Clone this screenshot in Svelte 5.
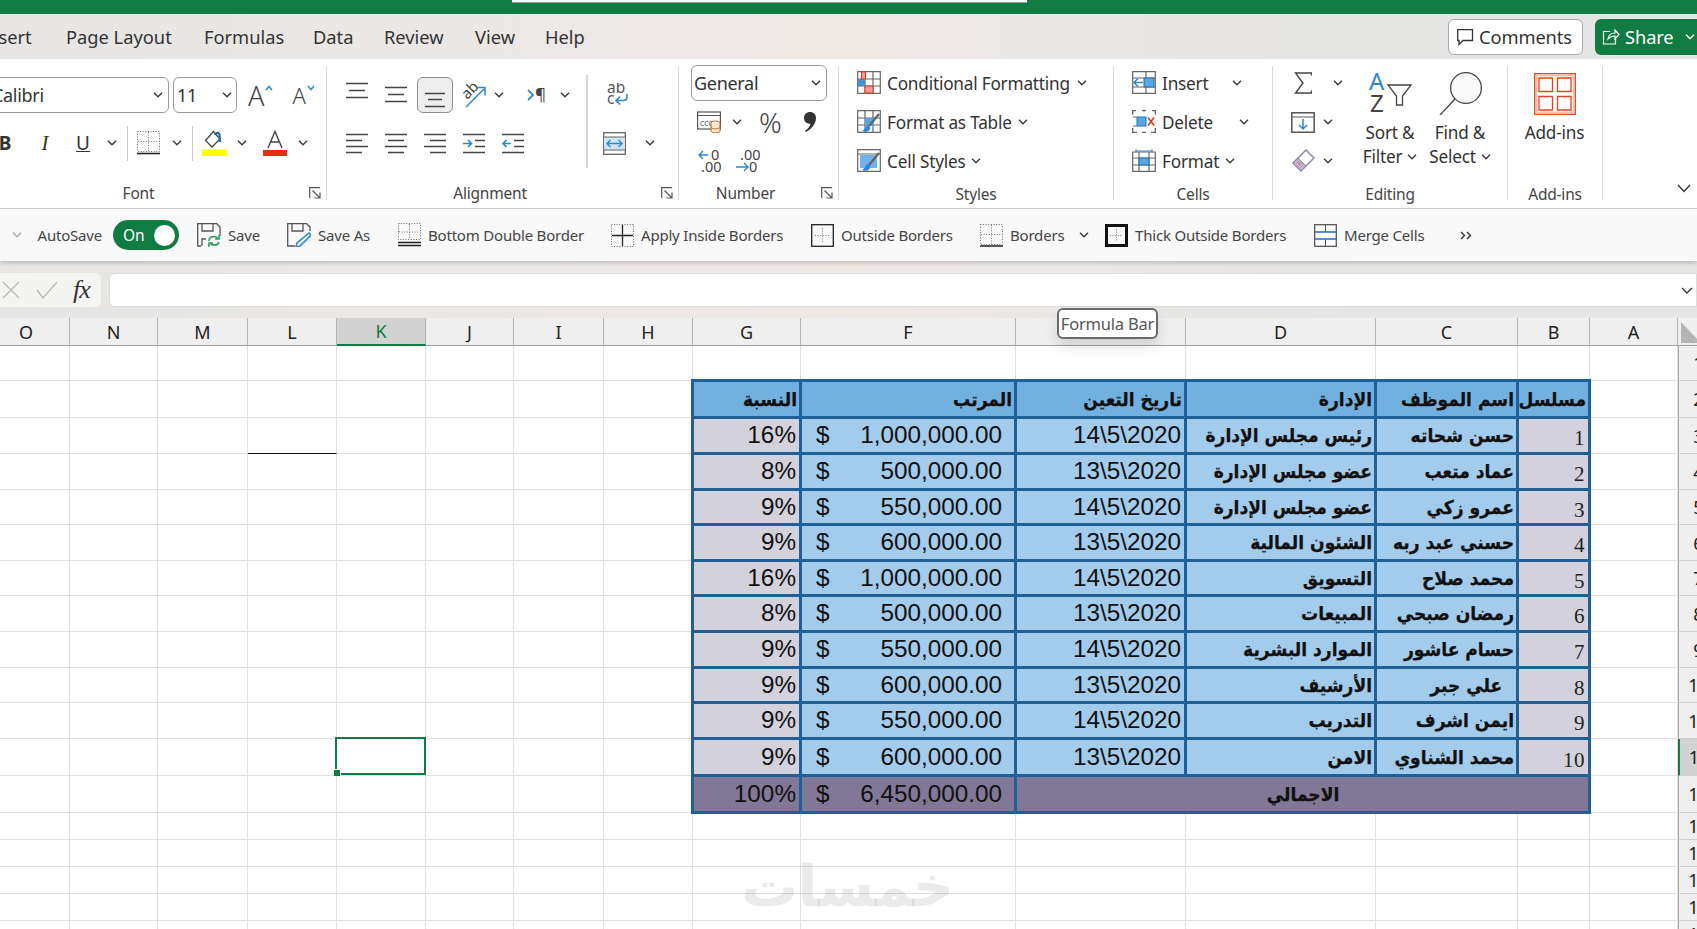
<script>
  const cols = ['O','N','M','L','K','J','I','H','G','F','E','D','C','B','A'];
  const heads = ['النسبة','المرتب','تاريخ التعين','الإدارة','اسم الموظف','مسلسل'];
  const people = [
    ['16%','1,000,000.00','14\\5\\2020','رئيس مجلس الإدارة','حسن شحاته','1'],
    ['8%','500,000.00','13\\5\\2020','عضو مجلس الإدارة','عماد متعب','2'],
    ['9%','550,000.00','14\\5\\2020','عضو مجلس الإدارة','عمرو زكي','3'],
    ['9%','600,000.00','13\\5\\2020','الشئون المالية','حسني عبد ربه','4'],
    ['16%','1,000,000.00','14\\5\\2020','التسويق','محمد صلاح','5'],
    ['8%','500,000.00','13\\5\\2020','المبيعات','رمضان صبحي','6'],
    ['9%','550,000.00','14\\5\\2020','الموارد البشرية','حسام عاشور','7'],
    ['9%','600,000.00','13\\5\\2020','الأرشيف','  علي جبر','8'],
    ['9%','550,000.00','14\\5\\2020','التدريب','ايمن اشرف','9'],
    ['9%','600,000.00','13\\5\\2020','الامن','محمد الشناوي','10']
  ];
  const rows = Array.from({ length: 18 }, (_, i) => i + 1);
  const blank = (c) => c < 8 || c > 13;
</script>

{#snippet chev(c = '')}
  <svg class="chev {c}" width="10" height="6" viewBox="0 0 10 6"><path d="M1 .8l4 4 4-4" fill="none" stroke="#3a3a3a" stroke-width="1.4"/></svg>
{/snippet}
{#snippet launcher(c = '')}
  <svg class="launch {c}" width="12" height="12" viewBox="0 0 12 12"><path d="M.7 11V.7H11M3.5 3.5l7 7M5.5 11h5.500V5.500" fill="none" stroke="#555" stroke-width="1.200"/></svg>
{/snippet}
{#snippet lines(ys, c = '')}
  <svg class={c} width="22" height="36" viewBox="0 0 22 36"><path d={ys} fill="none" stroke="#444" stroke-width="1.500"/></svg>
{/snippet}

<div class="app">
  <div class="green"><div class="search"></div></div>

  <div class="tabs">
    <div class="tabrow">
      <span>Insert</span><span>Page Layout</span><span>Formulas</span><span>Data</span><span>Review</span><span>View</span><span>Help</span>
    </div>
    <button class="comments">
      <svg width="18" height="18" viewBox="0 0 18 18"><path d="M1.700 1.700h14.800v10.800H7l-4 4v-4H1.700z" fill="none" stroke="#333" stroke-width="1.300"/></svg>
      Comments
    </button>
    <button class="share">
      <svg width="18" height="18" viewBox="0 0 18 18"><path d="M8 3.500H1.500V16h12v-5M6 11c.500-4 3.500-6 7-6V2l4 4.500L13 11V8c-3 0-5 .8-7 3z" fill="none" stroke="#fff" stroke-width="1.200"/></svg>
      Share
      <svg class="m6" width="10" height="6" viewBox="0 0 10 6"><path d="M1 .8l4 4 4-4" fill="none" stroke="#fff" stroke-width="1.400"/></svg>
    </button>
  </div>

  <div class="ribbon">
    <!-- Font -->
    <section class="group g-font">
      <div class="row r1">
        <div class="combo c-font"><span>Calibri</span>{@render chev()}</div>
        <div class="combo c-size"><span>11</span>{@render chev()}</div>
        <span class="big-a m11">A</span>
        <svg class="caret" width="8" height="6" viewBox="0 0 8 6"><path d="M1 5l3-3.500L7 5" fill="none" stroke="#2b88d8" stroke-width="1.500"/></svg>
        <span class="small-a m19">A</span>
        <svg class="caret" width="8" height="6" viewBox="0 0 8 6"><path d="M1 1l3 3.500L7 1" fill="none" stroke="#2b88d8" stroke-width="1.500"/></svg>
      </div>
      <div class="row r2">
        <b class="glyph w20 m15">B</b>
        <i class="glyph ital w18 m21">I</i>
        <u class="glyph w18 m20">U</u>
        {@render chev('m15')}
        <span class="vsep m10"></span>
        <svg class="m9" width="23" height="24" viewBox="0 0 23 24">
          <rect x=".5" y=".5" width="22" height="20" fill="none" stroke="#666" stroke-dasharray="1 1.600"/>
          <path d="M11.500 1v19M1 10.500h21" fill="none" stroke="#777" stroke-dasharray="1 1.600"/>
          <path d="M0 22.500h23" stroke="#222" stroke-width="1.600"/>
        </svg>
        {@render chev('m12')}
        <span class="vsep m10"></span>
        <svg class="m9" width="25" height="26" viewBox="0 0 25 26">
          <path d="M11.500 1.500L3.500 10.500l6.500 6.500 8-8z" fill="none" stroke="#444" stroke-width="1.300"/>
          <path d="M13 5c1-3 4-3 4.500 0l.8 7" fill="none" stroke="#1565a8" stroke-width="2"/>
          <rect y="19.500" width="25" height="6.500" fill="#ffff00"/>
        </svg>
        {@render chev('m10')}
        <svg class="m16" width="24" height="26" viewBox="0 0 24 26">
          <path d="M5 18L12 1.500 19 18M7.500 12h9" fill="none" stroke="#444" stroke-width="1.400"/>
          <rect y="20" width="24" height="6" fill="#e52f0c"/>
        </svg>
        {@render chev('m11')}
      </div>
      <div class="lbl up"><span class="lt w317">Font</span>{@render launcher('m12')}</div>
    </section>

    <!-- Alignment -->
    <section class="group g-align">
      <div class="body">
        <div class="acol1">
          <div class="row r1">
            {@render lines('M0 6.500h22M3 13.500h16M0 20.500h22','m19')}
            {@render lines('M0 10.500h22M3 17.500h16M0 24.500h22','m17')}
            <span class="pressed m10">{@render lines('M1 16.500h20M4 22.500h14M1 29.500h20')}</span>
            <svg class="m8" width="26" height="28" viewBox="0 0 26 28">
              <text x="2" y="15" transform="rotate(-45 9 12)" class="abtxt">ab</text>
              <path d="M5 26L23 8M16 6.500h8v8" fill="none" stroke="#2b88d8" stroke-width="1.500"/>
            </svg>
            {@render chev('m7')}
            <svg class="m23" width="20" height="16" viewBox="0 0 20 16">
              <path d="M1 3l5 5-5 5" fill="none" stroke="#2b88d8" stroke-width="1.800"/>
              <text x="8" y="13" class="pilcrow">¶</text>
            </svg>
            {@render chev('m13')}
          </div>
          <div class="row r2 t3">
            <svg class="m19" width="22" height="22" viewBox="0 0 22 22"><path d="M0 2.500h22M0 8.500h16M0 14.500h22M0 20.500h16" fill="none" stroke="#444" stroke-width="1.500"/></svg>
            <svg class="m17" width="22" height="22" viewBox="0 0 22 22"><path d="M0 2.500h22M3 8.500h16M0 14.500h22M3 20.500h16" fill="none" stroke="#444" stroke-width="1.500"/></svg>
            <svg class="m17" width="22" height="22" viewBox="0 0 22 22"><path d="M0 2.500h22M6 8.500h16M0 14.500h22M6 20.500h16" fill="none" stroke="#444" stroke-width="1.500"/></svg>
            <svg class="m17" width="22" height="22" viewBox="0 0 22 22"><path d="M0 2.500h22M12 8.500h10M12 14.500h10M0 20.500h22" fill="none" stroke="#444" stroke-width="1.500"/><path d="M0 11.500h8M5 8l3.500 3.500L5 15" fill="none" stroke="#2b88d8" stroke-width="1.700"/></svg>
            <svg class="m17" width="22" height="22" viewBox="0 0 22 22"><path d="M0 2.500h22M12 8.500h10M12 14.500h10M0 20.500h22" fill="none" stroke="#444" stroke-width="1.500"/><path d="M9 11.500H1M4.500 8L1 11.500 4.500 15" fill="none" stroke="#2b88d8" stroke-width="1.700"/></svg>
          </div>
        </div>
        <span class="subsep"></span>
        <div class="acol2">
          <div class="row r1">
            <svg class="m19" width="22" height="24" viewBox="0 0 22 24">
              <text x="0" y="10" class="wraptxt">ab</text><text x="0" y="21" class="wraptxt">c</text>
              <path d="M20 11v3c0 2.500-1 3.500-3.500 3.500H9M13 13.500l-4 4 4 4" fill="none" stroke="#2b88d8" stroke-width="1.600"/>
            </svg>
          </div>
          <div class="row r2 t3">
            <svg class="m15" width="23" height="23" viewBox="0 0 23 23">
              <rect x=".7" y=".7" width="21.600" height="21.600" fill="#fff" stroke="#666" stroke-width="1.300"/>
              <rect x="1" y="5" width="21" height="13" fill="#cfe4f7"/>
              <path d="M1 5h21M1 18h21" stroke="#666"/>
              <path d="M4 11.500h15M7.500 8L4 11.500 7.500 15M15.500 8l3.500 3.500-3.500 3.500" fill="none" stroke="#2b88d8" stroke-width="1.400"/>
            </svg>
            {@render chev('m19')}
          </div>
        </div>
      </div>
      <div class="lbl up"><span class="lt w326">Alignment</span>{@render launcher('m8')}</div>
    </section>

    <!-- Number -->
    <section class="group g-num">
      <div class="combo c-gen m12"><span>General</span>{@render chev()}</div>
      <div class="row nr2">
        <svg class="m18" width="24" height="22" viewBox="0 0 24 22">
          <rect x=".6" y="1" width="22.800" height="17" fill="#fff" stroke="#555" stroke-width="1.200"/>
          <path d="M1 4.500h22" stroke="#555"/>
          <text x="3" y="15" class="ccy">CCC</text>
          <ellipse cx="18.500" cy="12" rx="4.500" ry="2" fill="#fff" stroke="#c8641f"/>
          <path d="M14 12v8c0 2.400 9 2.400 9 0v-8M14 16c0 2.400 9 2.400 9 0" fill="#fbe7d6" stroke="#c8641f"/>
        </svg>
        {@render chev('m11')}
        <span class="pct m17">%</span>
        <svg class="m23" width="12" height="20" viewBox="0 0 12 20"><path d="M6 0c3.500 0 6 2.500 6 6 0 6-4.500 11-10 14l-1-1.200c3-2 5-4.300 5.500-7C2.500 12 0 9.500 0 6c0-3.500 2.500-6 6-6z" fill="#333"/></svg>
      </div>
      <div class="row nr3">
        <svg class="m19" width="24" height="25" viewBox="0 0 24 25">
          <path d="M10 6H1M5 2L1 6l4 4" fill="none" stroke="#2b88d8" stroke-width="1.400"/>
          <text x="13" y="11" class="dec">0</text><text x="3" y="23" class="dec">.00</text>
        </svg>
        <svg class="m14" width="24" height="25" viewBox="0 0 24 25">
          <text x="4" y="11" class="dec">.00</text>
          <path d="M0 18h11M8 14l4 4-4 4" fill="none" stroke="#2b88d8" stroke-width="1.400"/>
          <text x="13" y="23" class="dec">0</text>
        </svg>
      </div>
      <div class="lbl up"><span class="lt w133">Number</span>{@render launcher('m9')}</div>
    </section>

    <!-- Styles -->
    <section class="group g-sty">
      <div class="row lr first">
        <svg class="m18" width="24" height="24" viewBox="0 0 24 24">
          <path d="M.7.7h22.600v21.600H.7zM.7 8h22.600M.7 15h22.600M8 .7v21.600M16 .7v21.600" fill="#fff" stroke="#666" stroke-width="1.200"/>
          <rect x="1" y="8" width="7" height="7" fill="#3b93d8"/>
          <path d="M4.500 1h4v7h-4zM8 15h8v7H8z" fill="#ff9a96" stroke="#e5371b"/>
        </svg>
        <span class="ltx">Conditional Formatting</span>{@render chev('m7')}
      </div>
      <div class="row lr">
        <svg class="m18" width="24" height="24" viewBox="0 0 24 24">
          <path d="M.7.7h22.600v21.600H.7zM.7 8h22.600M.7 15h22.600M8 .7v21.600M16 .7v21.600" fill="#fff" stroke="#666" stroke-width="1.200"/>
          <rect x="8" y="8" width="9" height="8" fill="#5aa6e3"/>
          <path d="M22 4L12 16" stroke="#666" stroke-width="2.400"/>
          <path d="M11 15c-3 1-2 4-6 6 4 2 9 0 8-4z" fill="#2b88d8"/>
        </svg>
        <span class="ltx">Format as Table</span>{@render chev('m6')}
      </div>
      <div class="row lr">
        <svg class="m18" width="24" height="24" viewBox="0 0 24 24">
          <path d="M.7.7h22.600v21.600H.7zM.7 5h22.600" fill="#fff" stroke="#666" stroke-width="1.200"/>
          <rect x="3" y="6" width="17" height="13" fill="#6fb3ea"/>
          <path d="M22 4L12 16" stroke="#666" stroke-width="2.400"/>
          <path d="M11 15c-3 1-2 4-6 6 4 2 9 0 8-4z" fill="#2b88d8"/>
        </svg>
        <span class="ltx">Cell Styles</span>{@render chev('m6')}
      </div>
      <div class="lbl"><span class="lt full">Styles</span></div>
    </section>

    <!-- Cells -->
    <section class="group g-cel">
      <div class="row lr first">
        <svg class="m18" width="24" height="24" viewBox="0 0 24 24">
          <path d="M.7.7h22.600v21.600H.7zM.7 7h22.600M.7 16h22.600M14 .7v21.600" fill="#fff" stroke="#666" stroke-width="1.200"/>
          <rect x="12" y="7" width="10" height="9" fill="#5aa6e3" stroke="#2371b4"/>
          <path d="M11 11.500H2M6 7.500l-4 4 4 4" fill="none" stroke="#2b88d8" stroke-width="1.500"/>
        </svg>
        <span class="ltx">Insert</span>{@render chev('m24')}
      </div>
      <div class="row lr">
        <svg class="m18" width="24" height="24" viewBox="0 0 24 24">
          <path d="M4 .7H.7v4M20 .7h3.300v4M.7 18v4.300H5M23.300 18v4.300H19M10 .7h4M10 22.300h4" fill="none" stroke="#666" stroke-width="1.300"/>
          <path d="M.7 7h4M.7 16h4" stroke="#666"/>
          <rect x="5" y="7" width="9" height="9" fill="#5aa6e3" stroke="#2371b4"/>
          <path d="M16 7.500l6 8M22 7.500l-6 8" stroke="#e5371b" stroke-width="1.600"/>
        </svg>
        <span class="ltx">Delete</span>{@render chev('m26')}
      </div>
      <div class="row lr">
        <svg class="m18" width="24" height="24" viewBox="0 0 24 24">
          <path d="M.7 3h22.600v19.300H.7zM.7 9h22.600M.7 16h22.600M7 3v19.300M17 3v19.300" fill="#fff" stroke="#666" stroke-width="1.200"/>
          <rect x="7" y="9" width="10" height="7" fill="#5aa6e3" stroke="#2371b4"/>
          <path d="M4 2h16M4 .4v3.200M20 .4v3.200" stroke="#2b88d8" stroke-width="1.200"/>
        </svg>
        <span class="ltx">Format</span>{@render chev('m6')}
      </div>
      <div class="lbl"><span class="lt full">Cells</span></div>
    </section>

    <!-- Editing -->
    <section class="group g-edit">
      <div class="body">
        <div class="ecol">
          <div class="row lr first">
            <svg class="m21" width="18" height="22" viewBox="0 0 18 22"><path d="M17.500 3.500V1H1.500l7.500 10L1.500 21h16v-2.500" fill="none" stroke="#444" stroke-width="1.400"/></svg>
            {@render chev('m21')}
          </div>
          <div class="row lr">
            <svg class="m18" width="24" height="21" viewBox="0 0 24 21">
              <rect x=".8" y=".8" width="22.400" height="19.400" fill="#fff" stroke="#555" stroke-width="1.500"/>
              <path d="M1 5h22" stroke="#555"/>
              <path d="M12 7v10M8 13l4 4 4-4" fill="none" stroke="#2b88d8" stroke-width="1.500"/>
            </svg>
            {@render chev('m8')}
          </div>
          <div class="row lr">
            <svg class="m18" width="24" height="24" viewBox="0 0 24 24">
              <path d="M15 1l8 8-13 13-8-8z" fill="#fff" stroke="#8d86a8" stroke-width="1.500"/>
              <path d="M7 9l8 8-5 5-8-8z" fill="#b9b3cb" stroke="#8d86a8"/>
              <path d="M7 13l3 3" stroke="#e48a8a" stroke-width="2"/>
            </svg>
            {@render chev('m8')}
          </div>
        </div>
        <div class="bigcol w70 tight">
          <svg class="tall" width="43" height="41" viewBox="0 0 43 41">
            <text x="0" y="18" class="sa">A</text><text x="1" y="40" class="sz">Z</text>
            <path d="M19 13h23l-8.500 11v9h-6v-9z" fill="none" stroke="#444" stroke-width="1.300"/>
          </svg>
          <span class="bt">Sort &amp;</span>
          <span class="bt">Filter {@render chev()}</span>
        </div>
        <div class="bigcol w70 tight">
          <svg width="43" height="43" viewBox="0 0 43 43">
            <circle cx="27" cy="16" r="15.400" fill="#fafafa" stroke="#444" stroke-width="1.300"/>
            <path d="M16 27L1 43" stroke="#444" stroke-width="1.300"/>
          </svg>
          <span class="bt">Find &amp;</span>
          <span class="bt">Select {@render chev()}</span>
        </div>
      </div>
      <div class="lbl"><span class="lt full">Editing</span></div>
    </section>

    <!-- Add-ins -->
    <section class="group g-add">
      <div class="bigcol addc">
        <svg width="42" height="42" viewBox="0 0 42 42">
          <rect x=".7" y=".7" width="40.600" height="40.600" fill="none" stroke="#e5421f" stroke-width="1.300"/>
          <rect x="2.800" y="2.800" width="36.400" height="36.400" fill="none" stroke="#f2a48f" stroke-width="1"/>
          <path d="M5 5h13.500v13.500H5zM23.500 5H37v13.500H23.500zM5 23.500h13.500V37H5zM23.500 23.500H37V37H23.500z" fill="#fff" stroke="#e5421f" stroke-width="1.300"/>
        </svg>
        <span class="bt">Add-ins</span>
      </div>
      <div class="lbl"><span class="lt full">Add-ins</span></div>
    </section>

    <div class="collapse">
      <svg width="14" height="9" viewBox="0 0 14 9"><path d="M1 1l6 6.500L13 1" fill="none" stroke="#333" stroke-width="1.400"/></svg>
    </div>
  </div>

  <div class="qat">
    <svg width="10" height="6" viewBox="0 0 10 6"><path d="M1 .8l4 4 4-4" fill="none" stroke="#aaa" stroke-width="1.400"/></svg>
    <span class="q">AutoSave</span>
    <span class="toggle"><span>On</span><i></i></span>
    <span class="q">
      <svg width="24" height="24" viewBox="0 0 24 24">
        <path d="M4 23H.7V.7h19L23 4v9M5 1v7h11V1M5 23v-7h4" fill="none" stroke="#555" stroke-width="1.300"/>
        <path d="M12 18c0-5 7-6 9-2M22 12v4h-4M22 19c-1 4-7 4-9 1M12 24v-4h4" fill="none" stroke="#2f9e5b" stroke-width="1.600"/>
      </svg>Save
    </span>
    <span class="q">
      <svg width="24" height="24" viewBox="0 0 24 24">
        <path d="M8 23H.7V.7h19L23 4v4M5 1v7h11V1" fill="none" stroke="#555" stroke-width="1.300"/>
        <path d="M22 10l2 2-11 11-4 1 1-4z" fill="#fff" stroke="#2b88d8" stroke-width="1.600"/>
      </svg>Save As
    </span>
    <span class="q">
      <svg width="23" height="24" viewBox="0 0 23 24">
        <rect x=".5" y=".5" width="22" height="16" fill="none" stroke="#666" stroke-dasharray="1 1.600"/>
        <path d="M11.500 1v15M1 9h21" fill="none" stroke="#777" stroke-dasharray="1 1.600"/>
        <path d="M0 19.500h23M0 22.500h23" stroke="#222" stroke-width="1.300"/>
      </svg>Bottom Double Border
    </span>
    <span class="q">
      <svg width="23" height="23" viewBox="0 0 23 23">
        <rect x=".5" y=".5" width="22" height="22" fill="none" stroke="#666" stroke-dasharray="1 1.600"/>
        <path d="M11.500 1v21M1 11.500h21" stroke="#222" stroke-width="1.300"/>
      </svg>Apply Inside Borders
    </span>
    <span class="q">
      <svg width="23" height="23" viewBox="0 0 23 23">
        <rect x=".7" y=".7" width="21.600" height="21.600" fill="none" stroke="#222" stroke-width="1.300"/>
        <path d="M11.500 4v15M4 11.500h15" fill="none" stroke="#777" stroke-dasharray="1 1.600"/>
      </svg>Outside Borders
    </span>
    <span class="q">
      <svg width="23" height="23" viewBox="0 0 23 23">
        <rect x=".5" y=".5" width="22" height="20" fill="none" stroke="#666" stroke-dasharray="1 1.600"/>
        <path d="M11.500 1v19M1 10.500h21" fill="none" stroke="#777" stroke-dasharray="1 1.600"/>
        <path d="M0 22h23" stroke="#222" stroke-width="1.500"/>
      </svg>Borders{@render chev('m8')}
    </span>
    <span class="q">
      <svg width="23" height="23" viewBox="0 0 23 23">
        <rect x="1.500" y="1.500" width="20" height="20" fill="none" stroke="#111" stroke-width="3"/>
        <path d="M11.500 5v13M5 11.500h13" fill="none" stroke="#777" stroke-dasharray="1 1.600"/>
      </svg>Thick Outside Borders
    </span>
    <span class="q">
      <svg width="23" height="23" viewBox="0 0 23 23">
        <rect x=".7" y=".7" width="21.600" height="21.600" fill="#fff" stroke="#555" stroke-width="1.300"/>
        <path d="M11.500 1v7M11.500 15v7" stroke="#555"/>
        <path d="M1 8h21M1 15h21" stroke="#1b6ec2" stroke-width="1.500"/>
      </svg>Merge Cells
    </span>
    <svg width="12" height="9" viewBox="0 0 12 9"><path d="M1 1l3.500 3.500L1 8M7 1l3.500 3.500L7 8" fill="none" stroke="#333" stroke-width="1.400"/></svg>
  </div>

  <div class="fbar">
    <div class="fbtns">
      <svg width="18" height="18" viewBox="0 0 18 18"><path d="M1 1l16 16M17 1L1 17" stroke="#b9b9b9" stroke-width="1.300"/></svg>
      <svg class="m16" width="22" height="18" viewBox="0 0 22 18"><path d="M1 9l6 8L21 1" fill="none" stroke="#b9b9b9" stroke-width="1.300"/></svg>
      <span class="fx">fx</span>
    </div>
    <div class="finput">
      <svg width="12" height="7" viewBox="0 0 12 7"><path d="M1 1l5 5 5-5" fill="none" stroke="#333" stroke-width="1.300"/></svg>
    </div>
  </div>

  <div class="sheet">
    {#each cols as c, i}
      <div class="ch" class:cur={c === 'K'}>{c}</div>
    {/each}
    <div class="ch corner"><i></i></div>

    {#each rows as r}
      {#each cols as c, i}
        {#if blank(i) || r < 2 || r > 13}
          <div class="cell" class:selcell={c === 'K' && r === 12} class:black={c === 'L' && r === 3}></div>
        {:else if r === 2}
          <div class="t th" dir="rtl">{heads[i - 8]}</div>
        {:else if r === 13}
          {#if i === 8}
            <div class="t tot num">100%</div>
          {:else if i === 9}
            <div class="t tot num money"><span>$</span><span>6,450,000.00</span></div>
          {:else if i === 10}
            <div class="t tot ar merged" dir="rtl">الاجمالي</div>
          {/if}
        {:else if i === 8}
          <div class="t soft num">{people[r - 3][0]}</div>
        {:else if i === 9}
          <div class="t bl num money"><span>$</span><span>{people[r - 3][1]}</span></div>
        {:else if i === 10}
          <div class="t bl num">{people[r - 3][2]}</div>
        {:else if i === 11 || i === 12}
          <div class="t bl ar" dir="rtl">{people[r - 3][i - 8]}</div>
        {:else}
          <div class="t soft ser">{people[r - 3][5]}</div>
        {/if}
      {/each}
      <div class="rh" class:cur={r === 12}>{r}</div>
    {/each}

    <div class="mark" dir="rtl">خمسات</div>
    <div class="tip">Formula Bar</div>
  </div>
</div>

<style>
  :global(body) { margin: 0; }
  .app {
    width: 1697px; height: 929px; overflow: hidden; position: relative;
    display: flex; flex-direction: column; background: #fff; color: #333;
    font-family: "Noto Sans", "Open Sans", sans-serif;
  }
  svg { display: block; flex: none; }
  .m6 { margin-left: 6px; } .m7 { margin-left: 7px; } .m8 { margin-left: 8px; } .m9 { margin-left: 9px; }
  .m10 { margin-left: 10px; } .m11 { margin-left: 11px; } .m12 { margin-left: 12px; } .m13 { margin-left: 13px; }
  .m14 { margin-left: 14px; } .m15 { margin-left: 15px; } .m16 { margin-left: 16px; } .m17 { margin-left: 17px; } .m18 { margin-left: 18px; }
  .m19 { margin-left: 19px; } .m20 { margin-left: 20px; } .m21 { margin-left: 21px; } .m23 { margin-left: 23px; }
  .m24 { margin-left: 24px; } .m26 { margin-left: 26px; }

  .green { height: 14px; background: #107c41; flex: none; display: flex; padding-left: 512px; }
  .search { width: 515px; height: 2px; background: #fff; border-bottom: 1px solid #9a9a9a; }

  .tabs {
    height: 45px; flex: none; display: flex; align-items: center;
    background: linear-gradient(90deg, #e7e6e4, #efe9e6 50%, #e5e5e3 80%);
  }
  .tabrow {
    display: grid; grid-template-columns: 85px 138px 109px 71px 91px 70px 80px; flex: none;
    margin-left: -19px; width: 1467px; font-size: 18.300px;
  }
  .comments, .share {
    height: 36px; display: flex; align-items: center; box-sizing: border-box; flex: none;
    font: inherit; font-size: 18.300px; letter-spacing: -0.1px; border-radius: 6px; padding: 0;
  }
  .comments { width: 135px; background: #fff; color: #333; border: 1px solid #a9a9a9; gap: 5px; padding-left: 7px; }
  .share { width: 102px; margin-left: 12px; background: #107c41; color: #fff; border: 0; gap: 5px; padding-left: 7px; border-radius: 6px 0 0 6px; }

  .ribbon { height: 150px; flex: none; background: #fff; border-bottom: 1px solid #d2d2d2; box-sizing: border-box; display: flex; padding-top: 7px; margin-left: -20px; position: relative; }
  .group { height: 134px; display: flex; flex-direction: column; box-sizing: border-box; border-right: 1.500px solid #d8d8d8; flex: none; }
  .g-font { width: 347px; }
  .g-align { width: 352px; }
  .g-num { width: 160px; }
  .g-sty { width: 275px; }
  .g-cel { width: 159px; }
  .g-edit { width: 235px; }
  .g-add { width: 95px; }
  .collapse { margin-left: 74px; margin-top: 118px; }

  .row { display: flex; align-items: center; flex: none; }
  .r1 { height: 36px; margin-top: 11px; }
  .r2 { height: 36px; margin-top: 12px; }
  .t3 { margin-top: 12px; }

  .lbl { margin-top: auto; margin-bottom: -2px; height: 16px; display: flex; align-items: center; font-size: 15.500px; color: #444; letter-spacing: -0.2px; flex: none; }
  .lbl.up { margin-bottom: -1px; }
  .lt { text-align: center; display: block; }
  .w317 { width: 317px; } .w326 { width: 326px; } .w133 { width: 133px; } .full { width: 100%; }

  .combo { box-sizing: border-box; display: flex; align-items: center; justify-content: space-between; border: 1px solid #9a9a9a; border-radius: 6px; background: #fff; font-size: 18px; letter-spacing: -0.3px; color: #333; }
  .c-font { width: 189px; height: 36px; padding: 0 5px 0 11px; margin-right: 4px; }
  .c-size { width: 64px; height: 36px; padding: 0 4px 0 3px; }
  .c-gen { width: 136px; height: 36px; padding: 0 5px 0 2px; margin-top: -1px; flex: none; }
  .big-a { font-size: 27px; line-height: 1; color: #444; font-weight: 300; }
  .small-a { font-size: 22px; line-height: 1; color: #444; font-weight: 300; }
  .caret { margin-bottom: 14px; margin-left: 1px; }
  .glyph { display: block; text-align: center; font-size: 19px; color: #333; flex: none; }
  .ital { font-family: "Liberation Serif", serif; font-size: 21px; }
  .w18 { width: 18px; } .w20 { width: 20px; } .w70 { width: 70px; }
  .vsep { width: 1px; height: 35px; background: #c8c8c8; display: block; flex: none; }
  .body { display: flex; }
  .acol1 { width: 259px; flex: none; }
  .subsep { width: 1.500px; height: 93px; margin-top: 9px; background: #d8d8d8; flex: none; }
  .pressed { display: block; width: 36px; height: 36px; box-sizing: border-box; border: 1px solid #8e8e8e; border-radius: 6px; background: #eee; padding-left: 6px; flex: none; }
  .pressed svg { margin-top: -1px; }
  .abtxt { font: 15px "Noto Sans", sans-serif; fill: #444; }
  .pilcrow { font: 17px "Noto Sans", sans-serif; fill: #444; }
  .wraptxt { font: 15.500px "Noto Sans", sans-serif; fill: #555; }
  .ccy { font: 7px "Noto Sans", sans-serif; fill: #444; }
  .dec { font: 14.500px "Noto Sans", sans-serif; fill: #444; }
  .sa { font: 24px "Noto Sans", sans-serif; fill: #2b88d8; }
  .sz { font: 24px "Noto Sans", sans-serif; fill: #444; }
  .nr2 { height: 24px; margin-top: 9px; }
  .nr3 { height: 25px; margin-top: 15px; }
  .pct { font-size: 28px; line-height: 24px; color: #444; font-weight: 300; flex: none; width: 22px; }

  .lr { height: 39px; }
  .first { margin-top: -2.500px; }
  .ltx { margin-left: 6px; font-size: 17.200px; letter-spacing: -0.2px; white-space: nowrap; color: #333; }
  .ecol { width: 82px; flex: none; }
  .bigcol { display: flex; flex-direction: column; align-items: center; padding-top: 7px; flex: none; font-size: 17.200px; letter-spacing: -0.2px; }
  .tight { padding-top: 6px; }
  .tall { margin-bottom: 2px; }
  .bt { height: 24px; line-height: 24px; display: flex; align-items: center; gap: 5px; white-space: nowrap; margin-top: 0; }
  .bigcol svg + .bt { margin-top: 6px; }
  .addc { width: 93px; }

  .qat {
    height: 52px; flex: none; box-sizing: border-box; background: #f9f9f9; padding-left: 12px;
    display: grid; align-items: center;
    grid-template-columns: 25.500px 75.500px 84px 90px 111px 213px 200px 169px 125px 209px 146px 30px;
    font-size: 15px; letter-spacing: -0.2px; color: #444; box-shadow: 0 2px 4px rgba(0,0,0,.18); position: relative; z-index: 1;
  }
  .q { display: flex; align-items: center; gap: 7px; white-space: nowrap; }
  .toggle { width: 66px; height: 30px; border-radius: 15px; background: #107c41; color: #fff; display: flex; align-items: center; justify-content: space-between; box-sizing: border-box; padding: 0 4px 0 10px; font-size: 15.500px; }
  .toggle i { width: 21px; height: 21px; border-radius: 50%; background: #fff; display: block; }

  .fbar { height: 57px; flex: none; display: flex; align-items: flex-start; padding-top: 12px; box-sizing: border-box; gap: 8px;
    background: linear-gradient(90deg, #e7e6e4, #efe9e6 50%, #e5e5e3 80%); }
  .fbtns { width: 101px; height: 34px; background: #f4f4f3; border-radius: 0 6px 6px 0; display: flex; align-items: center; padding-left: 2px; box-sizing: border-box; flex: none; }
  .fx { font: italic 400 26px "Liberation Serif", serif; margin-left: 15px; color: #333; letter-spacing: -1px; }
  .finput { flex: 1; height: 34px; background: #fff; border-radius: 6px 0 0 6px; border: 1px solid #dcdcdc; box-sizing: border-box; display: flex; align-items: center; justify-content: flex-end; padding-right: 3px; }

  .sheet {
    position: relative; flex: none; margin-left: -17px; width: 1755px;
    display: grid;
    grid-template-columns: 87px 88px 90px 89px 89px 88px 90px 89px 108px 215px 170px 190px 142px 72px 88px 40px;
    grid-template-rows: 28px 35px 37px 36px 36px 35px 36px 35px 36px 36px 35px 36px 37px 37px 27px 27px 27px 27px 27px;
    font-family: "Noto Sans", sans-serif;
  }
  .ch { background: #efefef; border-right: 1px solid #b3b3b3; border-bottom: 1px solid #9d9d9d; box-sizing: border-box; display: flex; align-items: center; justify-content: center; font-size: 18px; color: #222; }
  .ch.cur { background: #d2d2d2; color: #107c41; border-bottom: 2px solid #107c41; }
  .corner { justify-content: flex-start; align-items: flex-start; padding: 4px 0 0 3px; }
  .corner i { display: block; width: 20px; height: 21px; background: #b4b4b4; clip-path: polygon(0 0, 0 100%, 100% 100%); }
  .rh { background: #efefef; border-left: 1px solid #a8a8a8; border-bottom: 1px solid #cfcfcf; box-sizing: border-box; display: flex; align-items: center; justify-content: center; font-size: 18px; color: #222; }
  .rh.cur { background: #d2d2d2; border-left: 2px solid #107c41; }
  .cell { border-right: 1px solid #e0e0e0; border-bottom: 1px solid #e0e0e0; box-sizing: border-box; }
  .black { border-bottom-color: #111; }
  .selcell { position: relative; z-index: 2; }
  .selcell::before { content: ""; position: absolute; inset: -2px -1px 0 -2px; border: 2px solid #107c41; }
  .selcell::after { content: ""; position: absolute; left: -3px; bottom: -1px; width: 6px; height: 6px; background: #107c41; box-shadow: 1px -1px 0 #fff; }

  .t { position: relative; display: flex; align-items: center; justify-content: flex-end; padding: 0 5px; box-sizing: border-box; color: #111; white-space: pre; min-width: 0; }
  .t::after { content: ""; position: absolute; inset: -2px -1px -1px -2px; border: 3px solid #1f6196; pointer-events: none; }
  .th { background: #72b0e0; font: 700 19px "DejaVu Sans Condensed", "DejaVu Sans", sans-serif; justify-content: flex-start; padding: 0 4px 2px; -webkit-text-stroke: .25px #111; }
  .bl { background: #a2cbec; }
  .soft { background: #d3d1dc; }
  .tot { background: #807896; }
  .ar { font: 700 19px "DejaVu Sans Condensed", "DejaVu Sans", sans-serif; justify-content: flex-start; padding: 0 4px 2px; -webkit-text-stroke: .25px #111; }
  .num { font: 24.300px "Liberation Sans", sans-serif; padding-bottom: 2px; }
  .ser { font: 21px "Liberation Serif", serif; color: #222; padding-top: 5px; letter-spacing: .5px; }
  .money { justify-content: space-between; padding: 0 14px 2px 15px; }
  .merged { grid-column: span 4; justify-content: center; }

  .mark { position: absolute; left: 762px; top: 543px; width: 205px; height: 50px; display: flex; align-items: center; justify-content: center; font: 700 56px "DejaVu Sans", sans-serif; color: rgba(0,0,0,.08); -webkit-text-stroke: 1.500px rgba(0,0,0,.02); white-space: nowrap; }
  .tip { position: absolute; left: 1074px; top: -10px; width: 101px; height: 31px; box-sizing: border-box; background: #fff; border: 2px solid #6a6a6a; border-radius: 6px; font-size: 16.500px; letter-spacing: -0.2px; color: #555; display: flex; align-items: center; justify-content: center; box-shadow: 0 8px 14px rgba(0,0,0,.12); white-space: nowrap; z-index: 3; }
</style>
